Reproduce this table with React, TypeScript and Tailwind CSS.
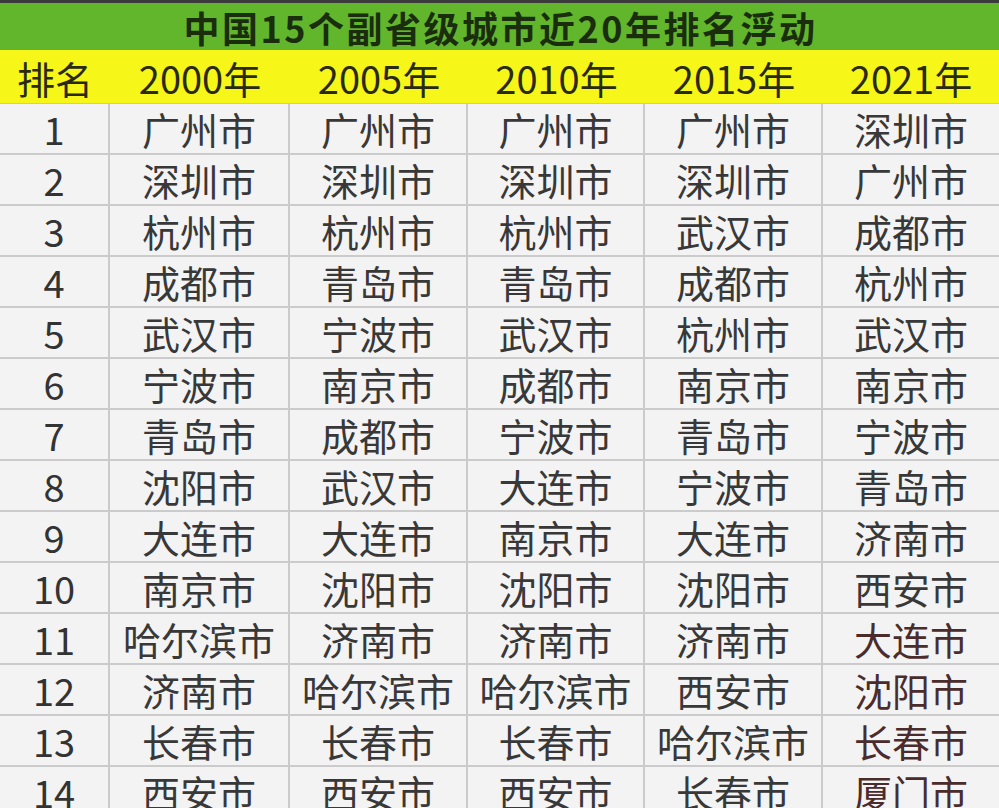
import React from "react";

const years = ["2000年", "2005年", "2010年", "2015年", "2021年"];

const ranks: string[][] = [
  ["广州市", "广州市", "广州市", "广州市", "深圳市"],
  ["深圳市", "深圳市", "深圳市", "深圳市", "广州市"],
  ["杭州市", "杭州市", "杭州市", "武汉市", "成都市"],
  ["成都市", "青岛市", "青岛市", "成都市", "杭州市"],
  ["武汉市", "宁波市", "武汉市", "杭州市", "武汉市"],
  ["宁波市", "南京市", "成都市", "南京市", "南京市"],
  ["青岛市", "成都市", "宁波市", "青岛市", "宁波市"],
  ["沈阳市", "武汉市", "大连市", "宁波市", "青岛市"],
  ["大连市", "大连市", "南京市", "大连市", "济南市"],
  ["南京市", "沈阳市", "沈阳市", "沈阳市", "西安市"],
  ["哈尔滨市", "济南市", "济南市", "济南市", "大连市"],
  ["济南市", "哈尔滨市", "哈尔滨市", "西安市", "沈阳市"],
  ["长春市", "长春市", "长春市", "哈尔滨市", "长春市"],
  ["西安市", "西安市", "西安市", "长春市", "厦门市"],
];

const cols = "grid grid-cols-[110px_180px_178px_177px_178px_1fr]";

const App = () => {
  return (
    <div
      className="w-[999px] h-[808px] overflow-hidden bg-[#f3f3f3]"
      style={{ fontFamily: '"Noto Sans CJK SC", "Noto Sans", sans-serif' }}
    >
      {/* title */}
      <div className="h-[50px] border-t-[3px] border-[#3b3b3b] bg-[#62b62c] flex items-center justify-center">
        <p className="text-[36px] font-bold leading-none text-[#1a2e0e] tracking-[2.5px] pl-[2px]">
          中国15个副省级城市近20年排名浮动
        </p>
      </div>

      {/* header */}
      <div className={`${cols} h-[54px] bg-[#f6f619] border-b border-[#c6c6c6]`}>
        <div className="flex items-center justify-center text-[38px] leading-none text-[#2a2a12] pt-[2px]">
          排名
        </div>
        {years.map((y) => (
          <div
            key={y}
            className="flex items-center justify-center text-[38px] leading-none text-[#2a2a12] pt-[2px]"
          >
            {y}
          </div>
        ))}
      </div>

      {/* rows */}
      {ranks.map((row, i) => (
        <div key={i} className={`${cols} h-[51px] border-b-2 border-[#cbcbcb]`}>
          <div className="flex items-center justify-center border-r-2 border-[#cbcbcb] text-[38px] leading-none text-[#333333]">
            {i + 1}
          </div>
          {row.map((city, j) => (
            <div
              key={j}
              className={`flex items-center justify-center text-[38px] leading-none ${
                j < 4 ? "border-r-2 border-[#cbcbcb]" : ""
              } ${j == 4 && i > 9 ? "text-[#4a2c2c]" : "text-[#383838]"}`}
            >
              {city}
            </div>
          ))}
        </div>
      ))}
    </div>
  );
};

export default App;
